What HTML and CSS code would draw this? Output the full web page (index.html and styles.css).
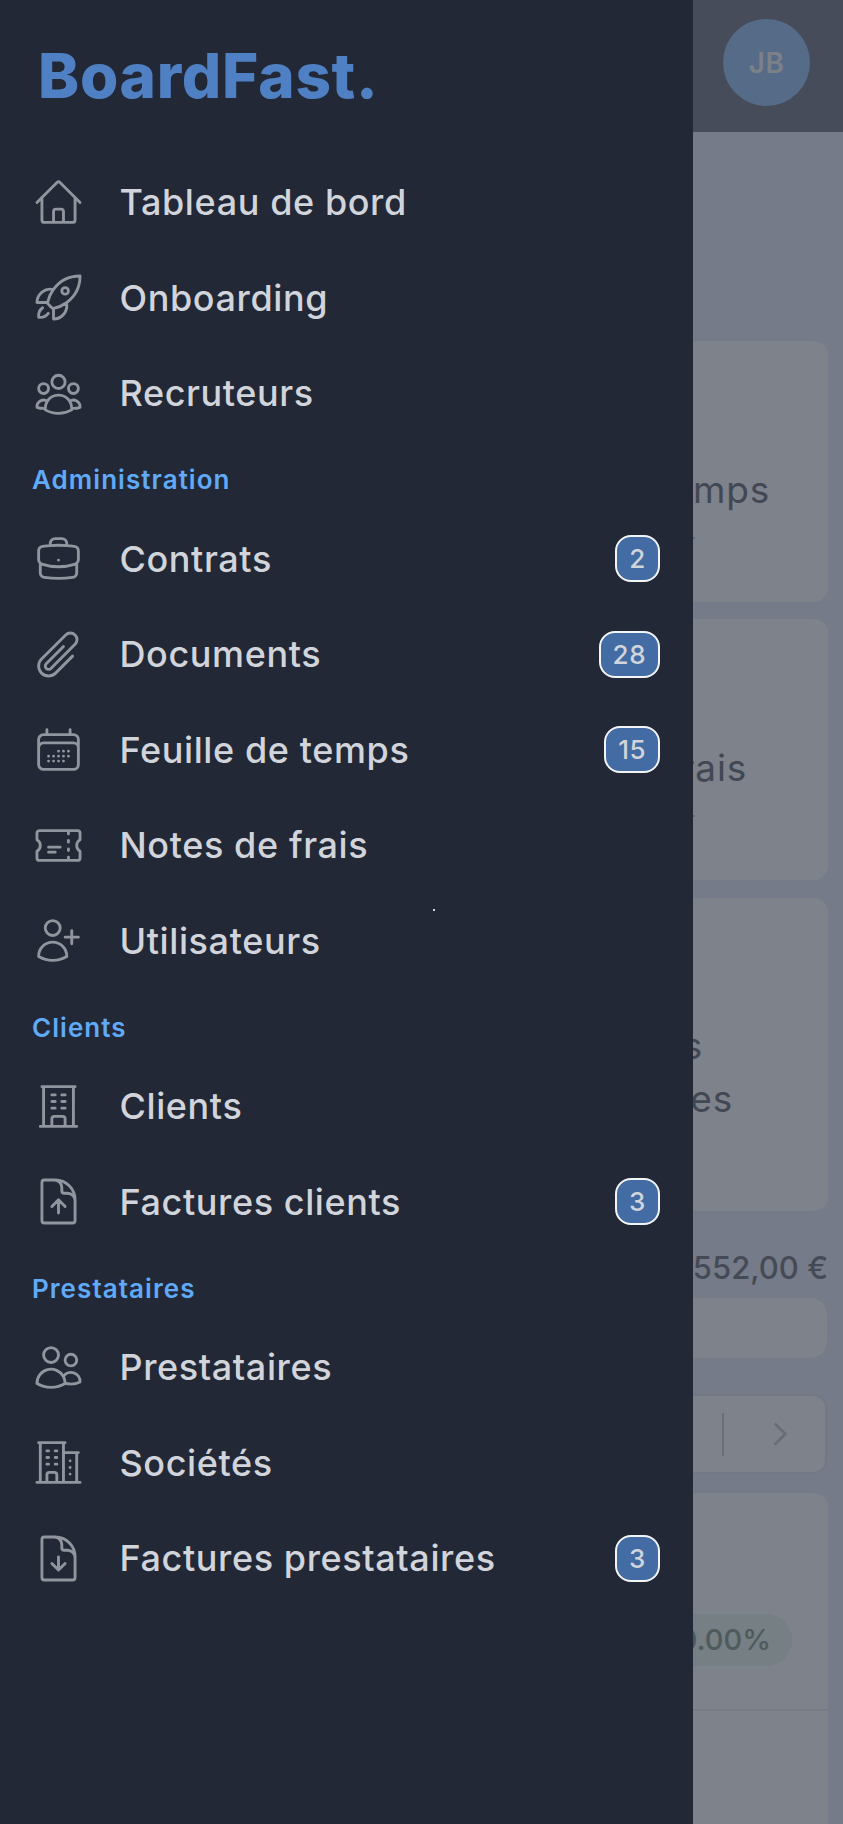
FILE: index.html
```html
<!DOCTYPE html>
<html lang="fr">
<head>
<meta charset="utf-8">
<title>BoardFast</title>
<link rel="stylesheet" href="styles.css">
</head>
<body>
<div class="page">
  <header class="topbar"><div class="avatar">JB</div></header>
  <main class="content">
    <section class="card card-a"><p class="card-title">Feuilles de temps</p><div class="card-sub"></div></section>
    <section class="card card-b"><p class="card-title">Notes de frais</p><div class="card-sub"></div></section>
    <section class="card card-c"><p class="card-title"><span class="line-short">Factures</span><br>prestataires</p></section>
    <p class="total">1 552,00 €</p>
    <div class="search"></div>
    <div class="pager">
      <span class="pager-sep"></span>
      <svg class="pager-next" viewBox="0 0 24 24"><path d="m8.25 4.5 7.5 7.5-7.5 7.5"/></svg>
    </div>
    <section class="card table-card">
      <div class="table-head"><span class="pill">100.00%</span></div>
    </section>
  </main>
</div>
<aside class="sidebar">
  <div class="logo">BoardFast.</div>
  <nav class="nav">
    <a class="row"><svg class="ico" viewBox="0 0 24 24"><path d="m2.25 12 8.954-8.955c.44-.439 1.152-.439 1.591 0L21.75 12M4.5 9.75v10.125c0 .621.504 1.125 1.125 1.125H9.75v-4.875c0-.621.504-1.125 1.125-1.125h2.25c.621 0 1.125.504 1.125 1.125V21h4.125c.621 0 1.125-.504 1.125-1.125V9.75M8.25 21h8.25"/></svg><span class="label">Tableau de bord</span></a>
    <a class="row"><svg class="ico" viewBox="0 0 24 24"><path d="M15.59 14.37a6 6 0 0 1-5.84 7.38v-4.8m5.84-2.58a14.98 14.98 0 0 0 6.16-12.12A14.98 14.98 0 0 0 9.631 8.41m5.96 5.96a14.926 14.926 0 0 1-5.841 2.58m-.119-8.54a6 6 0 0 0-7.381 5.84h4.8m2.581-5.84a14.927 14.927 0 0 0-2.58 5.84m2.699 2.7c-.103.021-.207.041-.311.06a15.09 15.09 0 0 1-2.448-2.448 14.9 14.9 0 0 1 .06-.312m-2.24 2.39a4.493 4.493 0 0 0-1.757 4.306 4.493 4.493 0 0 0 4.306-1.758M16.5 9a1.5 1.5 0 1 1-3 0 1.5 1.5 0 0 1 3 0Z"/></svg><span class="label">Onboarding</span></a>
    <a class="row"><svg class="ico" viewBox="0 0 24 24"><path d="M18 18.72a9.094 9.094 0 0 0 3.741-.479 3 3 0 0 0-4.682-2.72m.94 3.198.001.031c0 .225-.012.447-.037.666A11.944 11.944 0 0 1 12 21c-2.17 0-4.207-.576-5.963-1.584A6.062 6.062 0 0 1 6 18.719m12 0a5.971 5.971 0 0 0-.941-3.197m0 0A5.995 5.995 0 0 0 12 12.75a5.995 5.995 0 0 0-5.058 2.772m0 0a3 3 0 0 0-4.681 2.72 8.986 8.986 0 0 0 3.74.477m.94-3.197a5.971 5.971 0 0 0-.94 3.197M15 6.75a3 3 0 1 1-6 0 3 3 0 0 1 6 0Zm6 3a2.25 2.25 0 1 1-4.5 0 2.25 2.25 0 0 1 4.5 0Zm-13.5 0a2.25 2.25 0 1 1-4.5 0 2.25 2.25 0 0 1 4.5 0Z"/></svg><span class="label">Recruteurs</span></a>

    <div class="section">Administration</div>
    <a class="row"><svg class="ico" viewBox="0 0 24 24"><path d="M20.25 14.15v4.25c0 1.094-.787 2.036-1.872 2.18-2.087.277-4.216.42-6.378.42s-4.291-.143-6.378-.42c-1.085-.144-1.872-1.086-1.872-2.18v-4.25m16.5 0a2.18 2.18 0 0 0 .75-1.661V8.706c0-1.081-.768-2.015-1.837-2.175a48.114 48.114 0 0 0-3.413-.387m4.5 8.006c-.194.165-.42.295-.673.38A23.978 23.978 0 0 1 12 15.75c-2.648 0-5.195-.429-7.577-1.22a2.016 2.016 0 0 1-.673-.38m0 0A2.18 2.18 0 0 1 3 12.489V8.706c0-1.081.768-2.015 1.837-2.175a48.111 48.111 0 0 1 3.413-.387m7.5 0V5.25A2.25 2.25 0 0 0 13.5 3h-3a2.25 2.25 0 0 0-2.25 2.25v.894m7.5 0a48.667 48.667 0 0 0-7.5 0M12 12.75h.008v.008H12v-.008Z"/></svg><span class="label">Contrats</span><span class="badge">2</span></a>
    <a class="row"><svg class="ico" viewBox="0 0 24 24"><path d="m18.375 12.739-7.693 7.693a4.5 4.5 0 0 1-6.364-6.364l10.94-10.94A3 3 0 1 1 19.5 7.372L8.552 18.32m.009-.01-.01.01m5.699-9.941-7.81 7.81a1.5 1.5 0 0 0 2.112 2.13"/></svg><span class="label">Documents</span><span class="badge">28</span></a>
    <a class="row"><svg class="ico" viewBox="0 0 24 24"><path d="M6.75 3v2.25M17.25 3v2.25M3 18.75V7.5a2.25 2.25 0 0 1 2.25-2.25h13.5A2.25 2.25 0 0 1 21 7.5v11.25m-18 0A2.25 2.25 0 0 0 5.25 21h13.5A2.25 2.25 0 0 0 21 18.75m-18 0v-7.5A2.25 2.25 0 0 1 5.25 9h13.5A2.25 2.25 0 0 1 21 11.25v7.5m-9-6h.008v.008H12v-.008ZM12 15h.008v.008H12V15Zm0 2.25h.008v.008H12v-.008ZM9.75 15h.008v.008H9.75V15Zm0 2.25h.008v.008H9.75v-.008ZM7.5 15h.008v.008H7.5V15Zm0 2.25h.008v.008H7.5v-.008Zm6.75-4.5h.008v.008h-.008v-.008Zm0 2.25h.008v.008h-.008V15Zm0 2.25h.008v.008h-.008v-.008Zm2.25-4.5h.008v.008H16.5v-.008Zm0 2.25h.008v.008H16.5V15Z"/></svg><span class="label">Feuille de temps</span><span class="badge">15</span></a>
    <a class="row"><svg class="ico" viewBox="0 0 24 24"><path d="M16.5 6v.75m0 3v.75m0 3v.75m0 3V18m-9-5.25h5.25M7.5 15h3M3.375 5.25c-.621 0-1.125.504-1.125 1.125v3.026a2.999 2.999 0 0 1 0 5.198v3.026c0 .621.504 1.125 1.125 1.125h17.25c.621 0 1.125-.504 1.125-1.125v-3.026a2.999 2.999 0 0 1 0-5.198V6.375c0-.621-.504-1.125-1.125-1.125H3.375Z"/></svg><span class="label">Notes de frais</span></a>
    <a class="row"><svg class="ico" viewBox="0 0 24 24"><path d="M18 7.5v3m0 0v3m0-3h3m-3 0h-3m-2.25-4.125a3.375 3.375 0 1 1-6.75 0 3.375 3.375 0 0 1 6.75 0ZM3 19.235v-.11a6.375 6.375 0 0 1 12.75 0v.109A12.318 12.318 0 0 1 9.374 21c-2.331 0-4.512-.645-6.374-1.766Z"/></svg><span class="label">Utilisateurs</span></a>

    <div class="section">Clients</div>
    <a class="row"><svg class="ico" viewBox="0 0 24 24"><path d="M3.75 21h16.5M4.5 3h15M5.25 3v18m13.5-18v18M9 6.75h1.5m-1.5 3h1.5m-1.5 3h1.5m3-6H15m-1.5 3H15m-1.5 3H15M9 21v-3.375c0-.621.504-1.125 1.125-1.125h3.75c.621 0 1.125.504 1.125 1.125V21"/></svg><span class="label">Clients</span></a>
    <a class="row"><svg class="ico" viewBox="0 0 24 24"><path d="M19.5 14.25v-2.625a3.375 3.375 0 0 0-3.375-3.375h-1.5A1.125 1.125 0 0 1 13.5 7.125v-1.5a3.375 3.375 0 0 0-3.375-3.375H8.25m6.75 12-3-3m0 0-3 3m3-3v6m-1.5-15H5.625c-.621 0-1.125.504-1.125 1.125v17.25c0 .621.504 1.125 1.125 1.125h12.75c.621 0 1.125-.504 1.125-1.125V11.25a9 9 0 0 0-9-9Z"/></svg><span class="label">Factures clients</span><span class="badge">3</span></a>

    <div class="section">Prestataires</div>
    <a class="row"><svg class="ico" viewBox="0 0 24 24"><path d="M15 19.128a9.38 9.38 0 0 0 2.625.372 9.337 9.337 0 0 0 4.121-.952 4.125 4.125 0 0 0-7.533-2.493M15 19.128v-.003c0-1.113-.285-2.16-.786-3.07M15 19.128v.106A12.318 12.318 0 0 1 8.624 21c-2.331 0-4.512-.645-6.374-1.766l-.001-.109a6.375 6.375 0 0 1 11.964-3.07M12 6.375a3.375 3.375 0 1 1-6.75 0 3.375 3.375 0 0 1 6.75 0Zm8.25 2.25a2.625 2.625 0 1 1-5.25 0 2.625 2.625 0 0 1 5.25 0Z"/></svg><span class="label">Prestataires</span></a>
    <a class="row"><svg class="ico" viewBox="0 0 24 24"><path d="M2.25 21h19.5m-18-18v18m10.5-18v18m6-13.5V21M6.75 6.75h.75m-.75 3h.75m-.75 3h.75m3-6h.75m-.75 3h.75m-.75 3h.75M6.75 21v-3.375c0-.621.504-1.125 1.125-1.125h2.25c.621 0 1.125.504 1.125 1.125V21M3 3h12m-.75 4.5H21m-3.75 3.75h.008v.008h-.008v-.008Zm0 3h.008v.008h-.008v-.008Zm0 3h.008v.008h-.008v-.008Z"/></svg><span class="label">Sociétés</span></a>
    <a class="row"><svg class="ico" viewBox="0 0 24 24"><path d="M19.5 14.25v-2.625a3.375 3.375 0 0 0-3.375-3.375h-1.5A1.125 1.125 0 0 1 13.5 7.125v-1.5a3.375 3.375 0 0 0-3.375-3.375H8.25m.75 12 3 3m0 0 3-3m-3 3v-6m-1.5-9H5.625c-.621 0-1.125.504-1.125 1.125v17.25c0 .621.504 1.125 1.125 1.125h12.75c.621 0 1.125-.504 1.125-1.125V11.25a9 9 0 0 0-9-9Z"/></svg><span class="label">Factures prestataires</span><span class="badge">3</span></a>
  </nav>
  <span class="speck"></span>
</aside>
</body>
</html>
```
FILE: styles.css
```css
* { box-sizing: border-box; }
html, body { margin: 0; height: 100%; }
body {
  width: 843px;
  height: 1824px;
  overflow: hidden;
  position: relative;
  background: #757b88;
  font-family: "Inter", "Noto Sans", sans-serif;
}

/* dimmed page behind the drawer */
.page { width: 843px; height: 1824px; display: flex; flex-direction: column; }
.topbar {
  height: 132px;
  flex: none;
  background: #474c5a;
  display: flex;
  justify-content: flex-end;
  align-items: center;
  padding: 0 33px 7px 0;
}
.avatar {
  width: 87px;
  height: 87px;
  border-radius: 50%;
  background: #566b87;
  color: #7c8189;
  font-size: 28px;
  font-weight: 600;
  letter-spacing: 0.5px;
  display: flex;
  align-items: center;
  justify-content: center;
}
.content {
  flex: 1;
  padding: 209px 15px 0 0;
  display: flex;
  flex-direction: column;
  align-items: flex-end;
}
.card { width: 800px; background: #7e828b; border-radius: 14px; flex: none; overflow: hidden; }
.card-a { height: 261px; margin-bottom: 17px; }
.card-b { height: 261px; margin-bottom: 18px; }
.card-c { height: 313px; }
.card-title {
  margin: 0;
  color: #424754;
  font-size: 37px;
  line-height: 53px;
  font-weight: 400;
  letter-spacing: 0.8px;
  text-align: right;
}
.card-a .card-title { padding: 122px 58px 0 0; }
.card-b .card-title { padding: 122px 81px 0 0; }
.card-c .card-title { padding: 121px 95px 0 0; }
.line-short { margin-right: 30px; }
.card-sub { width: 60px; height: 2px; margin: 21px 133px 0 auto; background: #5d6c88; }
.total {
  margin: 38px 0 10px;
  height: 38px;
  line-height: 38px;
  color: #454a57;
  font-size: 31px;
  font-weight: 500;
  white-space: nowrap;
}
.search {
  width: 800px;
  height: 62px;
  flex: none;
  background: #7e828b;
  border: 1px solid #777b86;
  border-radius: 18px;
  margin-bottom: 35px;
}
.pager {
  width: 800px;
  height: 80px;
  flex: none;
  margin-right: 1px;
  background: #7e828b;
  border: 2px solid #747884;
  border-radius: 14px;
  display: flex;
  align-items: center;
  justify-content: flex-end;
  margin-bottom: 19px;
}
.pager-sep { width: 2px; height: 43px; background: #6b6f7b; margin-right: 39px; }
.pager-next {
  width: 34px;
  height: 34px;
  margin-right: 28px;
  fill: none;
  stroke: #676c78;
  stroke-width: 1.8;
}
.table-card { height: 340px; border-radius: 14px 14px 0 0; }
.table-head {
  height: 218px;
  border-bottom: 2px solid #777b86;
  padding: 121px 36px 0 0;
  display: flex;
  justify-content: flex-end;
  align-items: flex-start;
}
.pill {
  height: 52px;
  padding: 0 21px 0 40px;
  border-radius: 26px;
  background: #757f84;
  color: #4f5a5b;
  font-size: 29px;
  font-weight: 500;
  line-height: 52px;
}

/* drawer */
.sidebar {
  position: absolute;
  left: 0;
  top: 0;
  width: 693px;
  height: 1824px;
  background: #222836;
  display: flex;
  flex-direction: column;
}
.logo {
  height: 154.5px;
  padding: 44px 0 0 38px;
  flex: none;
  color: #4f80c4;
  font-size: 62px;
  line-height: 64px;
  font-weight: 800;
  letter-spacing: 0.7px;
}
.nav { display: flex; flex-direction: column; }
.row {
  height: 95.5px;
  flex: none;
  display: flex;
  align-items: center;
  padding: 0 33px 0 31.5px;
}
.ico {
  width: 53px;
  height: 53px;
  flex: none;
  fill: none;
  stroke: #91959e;
  stroke-width: 1.3;
  stroke-linecap: round;
  stroke-linejoin: round;
}
.label {
  margin-left: 35px;
  flex: 1;
  color: #d1d5db;
  font-size: 36px;
  font-weight: 500;
  letter-spacing: 0.6px;
  white-space: nowrap;
}
.badge {
  flex: none;
  height: 47px;
  min-width: 45px;
  padding: 0 12px;
  border: 2px solid #f3f4f6;
  border-radius: 16px;
  background: #426ca3;
  color: #d1d5db;
  font-size: 26px;
  font-weight: 500;
  letter-spacing: 0.5px;
  display: flex;
  align-items: center;
  justify-content: center;
}
.section {
  height: 70px;
  flex: none;
  padding: 22px 0 0 32px;
  color: #60aaf8;
  font-size: 26px;
  line-height: 34px;
  font-weight: 600;
  letter-spacing: 1.05px;
}
.speck {
  position: absolute;
  left: 433px;
  top: 909px;
  width: 2px;
  height: 2px;
  background: #cfd3da;
}
```
